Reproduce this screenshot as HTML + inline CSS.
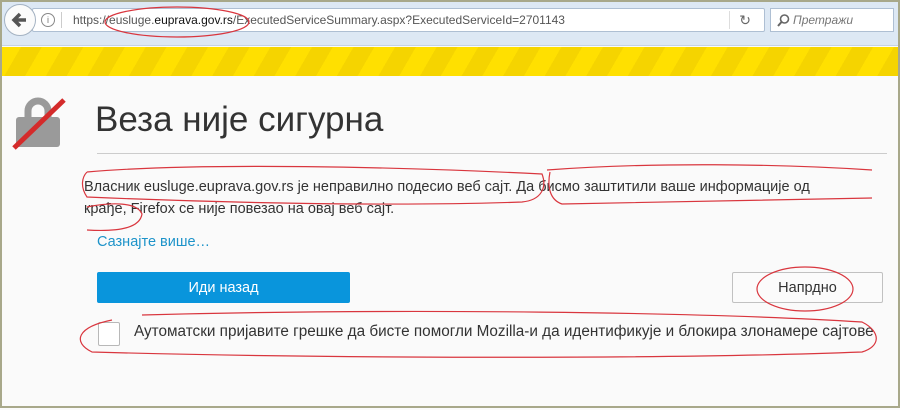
<!DOCTYPE html>
<html><head><meta charset="utf-8"><style>
*{margin:0;padding:0;box-sizing:border-box}
body{width:900px;height:408px;overflow:hidden;background:#fafafa;font-family:"Liberation Sans","DejaVu Sans",sans-serif;position:relative;border:2px solid #a8a88a}
.tb{position:absolute;left:0;top:0;width:896px;height:44px;background:#dde8f4;border-bottom:1px solid #c6d3e2}
.url{position:absolute;left:30px;top:6px;width:733px;height:24px;background:#fff;border:1px solid #aebfd3;border-radius:2px;font-size:12px;color:#555;line-height:22px;padding-left:40px}
.url b{color:#111;font-weight:normal}
.srch{position:absolute;left:768px;top:6px;width:124px;height:24px;background:#fff;border:1px solid #aebfd3;font-size:12px;color:#777;font-style:italic;line-height:22px;padding-left:22px}
.back{position:absolute;left:2px;top:2px;width:32px;height:32px;border-radius:50%;background:#fbfbfb;border:1px solid #a4b2c2}
.stripe{position:absolute;left:0;top:45px;width:896px;height:29px;background:repeating-linear-gradient(-60deg,#f5d400 0 18px,#ffe000 18px 36px)}
h1{position:absolute;left:93px;top:98px;font-size:35px;font-weight:300;color:#333}
.hr{position:absolute;left:95px;top:151px;width:790px;height:1px;background:#ccc}
p{position:absolute;left:82px;top:174px;width:760px;font-size:14.5px;line-height:22px;color:#333}
.lk{position:absolute;left:95px;top:232px;font-size:14.5px;color:#1d93c9}
.btn1{position:absolute;left:95px;top:270px;width:253px;height:31px;background:#0995dc;border-radius:2px;color:#fff;font-size:14.5px;text-align:center;line-height:33px}
.btn2{position:absolute;left:730px;top:270px;width:151px;height:31px;background:#fbfbfb;border:1px solid #c1c1c1;border-radius:2px;color:#333;font-size:14.5px;text-align:center;line-height:31px}
.cb{position:absolute;left:96px;top:320px;width:22px;height:24px;border:1px solid #b8b8b8;background:#fff;border-radius:2px}
.cbt{position:absolute;left:132px;top:321px;font-size:15.3px;color:#333;white-space:nowrap}
</style></head><body>
<div class="tb">
<div class="url">https://<span style="color:#555">eusluge.</span><b>euprava.gov.rs</b>/ExecutedServiceSummary.aspx?ExecutedServiceId=2701143
<span style="position:absolute;left:8px;top:4px;width:14px;height:14px;border:1px solid #888;border-radius:50%;font-size:9px;line-height:12px;text-align:center;color:#777;font-style:normal">i</span>
<span style="position:absolute;left:28px;top:3px;width:1px;height:16px;background:#ccc"></span>
<span style="position:absolute;right:34px;top:2px;width:1px;height:18px;background:#ddd"></span>
<span style="position:absolute;right:13px;top:0;font-size:14px;color:#666">↻</span></div>
<div class="back"><svg width="30" height="30" viewBox="0 0 30 30"><path d="M21 15H10M15 9l-6 6 6 6" stroke="#555" stroke-width="3.5" fill="none"/></svg></div>
<div class="srch"><svg style="position:absolute;left:6px;top:5px" width="13" height="13" viewBox="0 0 13 13"><circle cx="7.5" cy="5" r="4" stroke="#666" stroke-width="1.6" fill="none"/><path d="M4.5 8L1 12" stroke="#666" stroke-width="2"/></svg>Претражи</div>
</div>
<div class="stripe"></div>
<svg style="position:absolute;left:8px;top:92px" width="56" height="56" viewBox="0 0 56 56"><path d="M18 24V17a10 10 0 0 1 20 0v7" stroke="#9a9a9a" stroke-width="7" fill="none"/><rect x="6" y="23" width="44" height="30" rx="3" fill="#9a9a9a"/><path d="M4 54L54 6" stroke="#d42b2b" stroke-width="5"/></svg>
<h1>Веза није сигурна</h1>
<div class="hr"></div>
<p>Власник eusluge.euprava.gov.rs је неправилно подесио веб сајт. Да бисмо заштитили ваше информације од крађе, Firefox се није повезао на овај веб сајт.</p>
<div class="lk">Сазнајте више…</div>
<div class="btn1">Иди назад</div>
<div class="btn2">Напрдно</div>
<div class="cb"></div>
<div class="cbt">Аутоматски пријавите грешке да бисте помогли Mozilla-и да идентификује и блокира злонамере сајтове</div>
<svg style="position:absolute;left:0;top:0" width="900" height="408" fill="none" stroke="#d9363e" stroke-width="1.2">
<ellipse cx="175" cy="20" rx="72" ry="15"/>
<path d="M85 170C200 160 400 165 540 172C545 185 540 198 520 200C380 205 200 200 85 195C78 185 80 175 85 170"/>
<path d="M545 168C650 160 780 162 870 168M548 170C545 185 548 198 560 202C700 200 800 198 870 196"/>
<path d="M85 205C110 200 135 200 140 212C138 225 120 230 85 228"/>
<ellipse cx="803" cy="287" rx="48" ry="22"/>
<path d="M140 313C400 306 700 310 860 320C880 330 878 345 860 350C650 358 300 356 90 350C70 340 75 325 110 318"/>
</svg>
</body></html>
